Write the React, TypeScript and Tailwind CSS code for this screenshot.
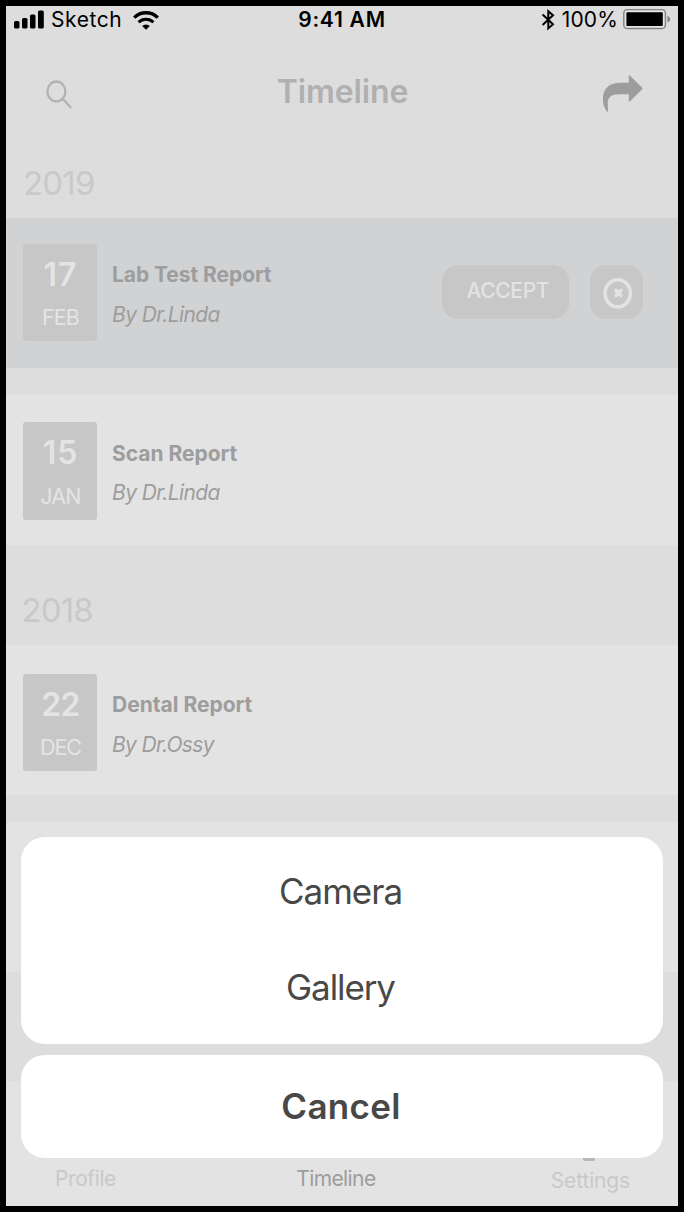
type Entry = {
  day: string;
  month: string;
  title: string;
  doctor: string;
  titleTracking: string;
  dayTracking: string;
  doctorTracking: string;
  monthTracking: string;
};

function SignalIcon() {
  return (
    <svg width="30" height="20" viewBox="0 0 30 20" className="shrink-0">
      <rect x="0" y="11" width="5.5" height="7.5" rx="1.6" />
      <rect x="8" y="8" width="5.5" height="10.5" rx="1.6" />
      <rect x="16" y="4.5" width="5.5" height="14" rx="1.6" />
      <rect x="24" y="0.5" width="5.8" height="18" rx="1.6" />
    </svg>
  );
}

function WifiIcon() {
  return (
    <svg width="26" height="19" viewBox="0 0 26 19" className="shrink-0" fill="none" stroke="#000" strokeWidth="3.3">
      <path d="M1.2 6.6 A16.8 16.8 0 0 1 24.8 6.6" />
      <path d="M5.6 11.2 A10.6 10.6 0 0 1 20.4 11.2" strokeWidth="3" />
      <path d="M13 18.8 L9.2 15 A5.4 5.4 0 0 1 16.8 15 Z" fill="#000" stroke="none" />
    </svg>
  );
}

function BluetoothIcon() {
  return (
    <svg width="14" height="22" viewBox="0 0 14 22" className="shrink-0" fill="none" stroke="#000" strokeWidth="2">
      <path d="M1.6 5.6 L12 15.3 L7.3 19.4 V2.2 L12 6.3 L1.6 15.9" />
    </svg>
  );
}

function BatteryIcon() {
  return (
    <svg width="48" height="22" viewBox="0 0 48 22" className="shrink-0">
      <rect x="0.8" y="0.6" width="41.6" height="19" rx="3.6" fill="#e6e6e6" stroke="#868686" strokeWidth="1.5" />
      <rect x="3.4" y="3.2" width="36.4" height="13.8" rx="0.8" />
      <path d="M44.4 6.8 Q47.2 8 47.2 10.2 Q47.2 12.4 44.4 13.6 Z" fill="#868686" />
    </svg>
  );
}

function SearchIcon() {
  return (
    <svg width="28" height="30" viewBox="0 0 28 30" fill="none" stroke="#b2b2b2" strokeWidth="2.3" strokeLinecap="round">
      <ellipse cx="11.4" cy="12.4" rx="9" ry="9.9" />
      <path d="M17.8 19.8 L25.6 28.2" />
    </svg>
  );
}

function ShareIcon() {
  return (
    <svg width="42" height="38" viewBox="0 0 42 38" fill="#9d9d9d">
      <path d="M26.8 0.8 Q26.8 -0.3 27.8 0.5 L40 12.4 Q40.9 13.4 40 14.4 L28 26.2 Q26.8 27.1 26.8 25.8 V19.3 H17.5 C9 19.3 5.8 22.4 5.7 28 C5.7 31.4 6.2 34.2 5.9 36.4 Q5.5 37.2 4.9 36.4 C1.8 32.2 0.7 28 1 23 C1.4 12.6 8 7.7 18.5 7.7 H26.8 Z" />
    </svg>
  );
}

function CloseIcon() {
  return (
    <svg width="30" height="32" viewBox="0 0 30 32" fill="none" stroke="#e3e3e3">
      <ellipse cx="14.7" cy="16.3" rx="12.7" ry="13.6" strokeWidth="3.6" />
      <path d="M13.1 13.5 L17.9 18.5 M17.9 13.5 L13.1 18.5" strokeWidth="3.8" strokeLinecap="round" />
    </svg>
  );
}

function DateBadge({ entry }: { entry: Entry }) {
  return (
    <div className="flex h-[97.5px] w-[74px] shrink-0 flex-col items-center rounded-[3px] bg-[#c7c7c7] pt-[11px] pl-px text-[#e4e4e4]">
      <span className={`text-[32px] leading-10 font-semibold ${entry.dayTracking}`}>{entry.day}</span>
      <span className={`mt-[10.4px] text-[21.5px] leading-6 font-normal whitespace-nowrap ${entry.monthTracking}`}>
        {entry.month}
      </span>
    </div>
  );
}

function ReportInfo({ entry }: { entry: Entry }) {
  return (
    <div className="ml-[15px] flex flex-col pt-[16.3px] whitespace-nowrap text-[#9d9d9d]">
      <span className={`text-[21px] leading-[30px] font-bold ${entry.titleTracking}`}>{entry.title}</span>
      <span className={`mt-[9.8px] text-[21px] leading-[30px] font-normal italic ${entry.doctorTracking}`}>
        {entry.doctor}
      </span>
    </div>
  );
}

const lab: Entry = {
  day: "17",
  month: "FEB",
  title: "Lab Test Report",
  doctor: "By Dr.Linda",
  titleTracking: "tracking-[-0.06px]",
  dayTracking: "tracking-[1px]",
  doctorTracking: "tracking-[-0.6px]",
  monthTracking: "tracking-[-0.9px]",
};
const scan: Entry = {
  day: "15",
  month: "JAN",
  title: "Scan Report",
  doctor: "By Dr.Linda",
  titleTracking: "tracking-[-0.02px]",
  dayTracking: "tracking-[1px]",
  doctorTracking: "tracking-[-0.6px]",
  monthTracking: "tracking-[-0.8px]",
};
const dental: Entry = {
  day: "22",
  month: "DEC",
  title: "Dental Report",
  doctor: "By Dr.Ossy",
  titleTracking: "tracking-[0px]",
  dayTracking: "tracking-[-0.8px]",
  doctorTracking: "tracking-[-0.65px]",
  monthTracking: "tracking-[-1px]",
};

export default function App() {
  return (
    <div className="relative flex h-[1212px] w-[684px] flex-col overflow-hidden border-6 border-black bg-[#dddddd] font-['Inter',sans-serif]">
      <div className="grid h-7 shrink-0 grid-cols-3 items-center whitespace-nowrap text-black">
        <div className="flex items-center pl-2">
          <SignalIcon />
          <span className="ml-[7px] text-[21px] leading-7 tracking-[0.55px]">Sketch</span>
          <span className="ml-[11px]">
            <WifiIcon />
          </span>
        </div>
        <span className="text-center text-[21px] leading-7 font-semibold tracking-[0.75px]">9:41 AM</span>
        <div className="flex items-center justify-end pr-[7px]">
          <BluetoothIcon />
          <span className="ml-[7px] text-[21px] leading-7 tracking-[0.15px]">100%</span>
          <span className="ml-[5px]">
            <BatteryIcon />
          </span>
        </div>
      </div>

      <header className="flex h-[116px] shrink-0 items-start justify-between pr-[34px] pl-[39px]">
        <button className="mt-[45px] w-[42px]" aria-label="Search">
          <SearchIcon />
        </button>
        <h1 className="mt-[38px] mr-[4px] text-[32px] leading-10 font-semibold tracking-[-0.1px] text-[#b0b0b0]">Timeline</h1>
        <button className="mt-[41px]" aria-label="Share">
          <ShareIcon />
        </button>
      </header>

      <h2 className="h-[68px] shrink-0 pt-[13px] pl-[17px] text-[33px] leading-10 font-normal tracking-[-0.8px] text-[#c9c9c9]">2019</h2>

      <section className="flex h-[150px] shrink-0 items-start bg-[#d1d2d4] pt-[25.5px] pl-[17px]">
        <DateBadge entry={lab} />
        <ReportInfo entry={lab} />
        <div className="mt-[21px] mr-[35px] ml-auto flex gap-[21px]">
          <button className="flex h-[54.5px] w-[127px] items-start rounded-[16px] bg-[#c7c7c7] pt-[12px] pl-[24.5px] text-[21px] leading-7 font-medium tracking-[-0.35px] text-[#e3e3e3]">
            ACCEPT
          </button>
          <button className="flex h-[54.5px] w-[53px] items-center justify-center rounded-[16px] bg-[#c7c7c7] pt-[2px] pl-[2px]" aria-label="Decline">
            <CloseIcon />
          </button>
        </div>
      </section>

      <section className="mt-[27px] flex h-[150px] shrink-0 items-start bg-[#e3e3e3] pt-[27.3px] pl-[17px]">
        <DateBadge entry={scan} />
        <ReportInfo entry={scan} />
      </section>

      <h2 className="h-[100px] shrink-0 pt-[45px] pl-[15.5px] text-[33px] leading-10 font-normal tracking-[-0.9px] text-[#c9c9c9]">2018</h2>

      <section className="flex h-[150px] shrink-0 items-start bg-[#e3e3e3] pt-[28.7px] pl-[17px]">
        <DateBadge entry={dental} />
        <ReportInfo entry={dental} />
      </section>

      <section className="mt-[27px] h-[150px] shrink-0 bg-[#e3e3e3]" />

      <nav className="mt-auto flex h-[125px] shrink-0 items-end justify-between bg-[#e3e3e3] pr-12 pb-[13.5px] pl-[49px] text-[21px] leading-7 font-normal whitespace-nowrap">
        <span className="tracking-[-0.4px] text-[#c9c9c9]">Profile</span>
        <span className="ml-[5px] tracking-[-0.6px] text-[#9d9d9d]">Timeline</span>
        <span className="-mb-[2px] flex flex-col items-center text-[#c9c9c9]">
          <svg width="12" height="12" viewBox="0 0 12 12" fill="#b8b8b8" className="mr-[2px]">
            <path d="M0 0 H12 V4.2 Q12 5.9 10.6 5.9 H1.4 Q0 5.9 0 4.2 Z" />
          </svg>
          <span className="tracking-[-0.15px]">Settings</span>
        </span>
      </nav>

      <div className="absolute top-[830.5px] left-[15px] flex w-[642px] flex-col gap-[11px] text-[35px] leading-10 text-[#484848]">
        <div className="flex h-[207.5px] flex-col items-center rounded-[24px] bg-white pt-[34px] pr-[3px]">
          <button className="font-normal tracking-[-1px]">Camera</button>
          <button className="mt-14 font-normal tracking-[-1.1px]">Gallery</button>
        </div>
        <button className="flex h-[103px] items-center justify-center rounded-[24px] bg-white pr-[2px] pb-[2px] font-semibold tracking-[0.3px]">
          Cancel
        </button>
      </div>
    </div>
  );
}
